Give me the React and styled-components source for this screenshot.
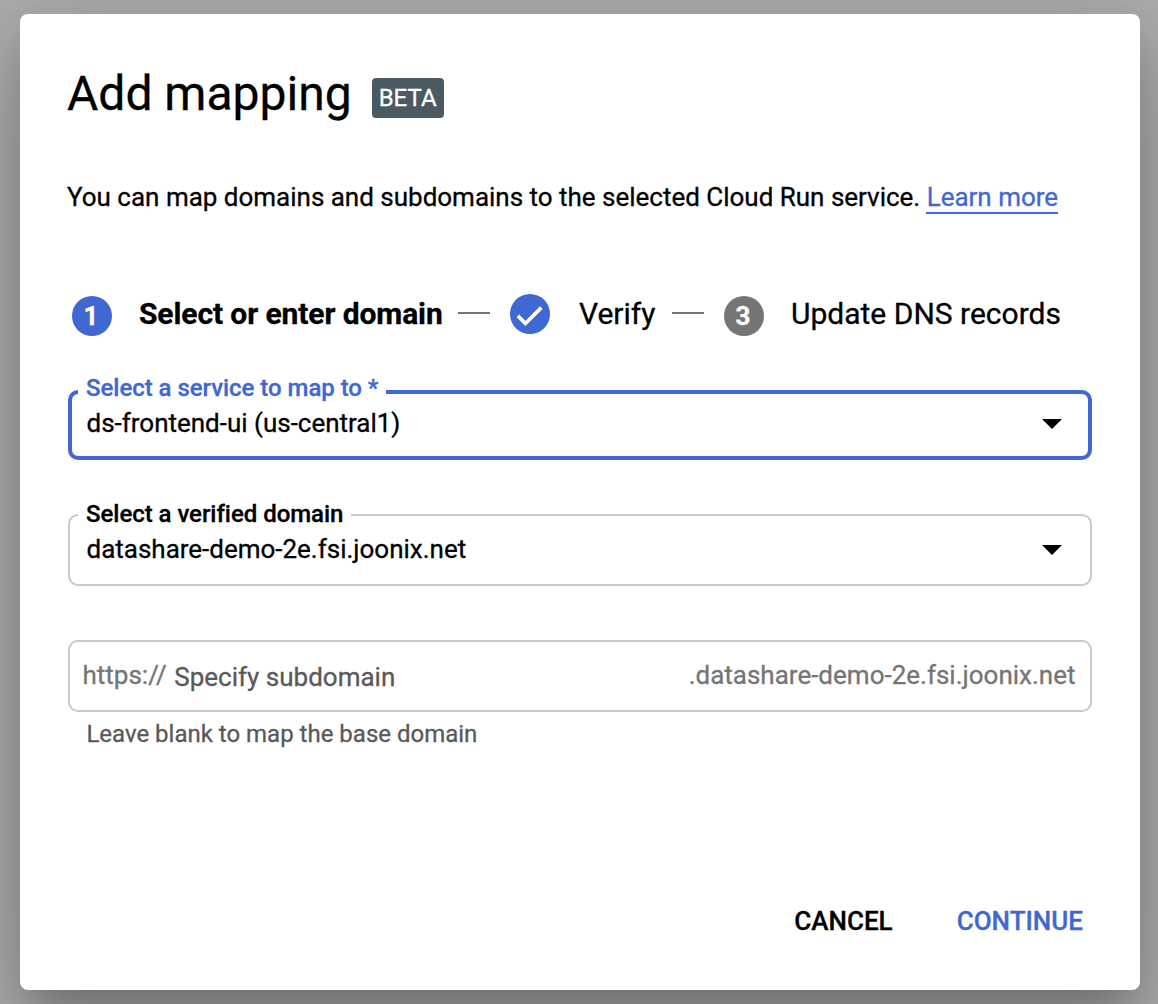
import React from "react";
import styled, { createGlobalStyle } from "styled-components";

const BLUE = "#3f68d2";

const GlobalStyle = createGlobalStyle`
  * { box-sizing: border-box; }
  body {
    margin: 0;
    background: #adadad;
    color: #000;
    font-family: Roboto, "Liberation Sans", sans-serif;
    -webkit-text-stroke: 0.3px;
    overflow: hidden;
  }
`;

const Backdrop = styled.div`
  height: 1004px;
  padding: 14px 18px 14px 20px;
`;

const Dialog = styled.main`
  display: flex;
  flex-direction: column;
  height: 976px;
  padding: 48px 48px 43px;
  background: #fff;
  border-radius: 8px;
  box-shadow:
    0 22px 30px -14px rgba(0, 0, 0, 0.2),
    0 48px 76px 6px rgba(0, 0, 0, 0.14),
    0 18px 92px 16px rgba(0, 0, 0, 0.12);
`;

const Header = styled.header`
  display: flex;
  align-items: center;
  gap: 20px;
  height: 64px;
  margin-left: -1px;
`;

const Title = styled.h1`
  margin: 0;
  font-size: 48px;
  font-weight: 400;
  line-height: 64px;
  white-space: nowrap;
`;

const Badge = styled.span`
  width: 72px;
  height: 40px;
  margin-top: 8px;
  border-radius: 4px;
  background: #4a5a62;
  color: #fff;
  font-size: 24px;
  line-height: 40px;
  text-align: center;
`;

const Intro = styled.p`
  margin: 51px 0 0 -1px;
  font-size: 26px;
  line-height: 40px;
  letter-spacing: -0.01px;
  white-space: nowrap;
`;

const Link = styled.a`
  margin-left: -1px;
  padding-left: 1px;
  border-bottom: 2px solid ${BLUE};
  color: ${BLUE};
`;

const Stepper = styled.ol`
  display: flex;
  align-items: center;
  height: 44px;
  margin: 75px 0 0;
  padding: 0 0 0 4px;
  list-style: none;
`;

const Step = styled.li`
  display: flex;
  align-items: center;
  width: ${(p) => p.$width}px;
`;

const StepDot = styled.span`
  display: grid;
  place-items: center;
  flex: none;
  width: 40px;
  height: 40px;
  margin-top: ${(p) => (p.$done ? 0 : 4)}px;
  padding-right: ${(p) => (p.$done ? 0 : 2)}px;
  border-radius: 50%;
  background: ${(p) => (p.$muted ? "#757575" : BLUE)};
  color: #fff;
  font-size: 26px;
  font-weight: 700;
  line-height: 40px;
`;

const StepLabel = styled.span`
  margin-left: ${(p) => p.$indent || 27}px;
  font-size: 30px;
  font-weight: ${(p) => (p.$active ? 700 : 400)};
  letter-spacing: ${(p) => (p.$active ? "-0.1px" : "0")};
  line-height: 44px;
  white-space: nowrap;
`;

const Connector = styled.li`
  width: 32px;
  height: 2px;
  margin: 0 20px 2px 0;
  background: #757575;
`;

const Field = styled.div`
  position: relative;
  display: flex;
  align-items: center;
  justify-content: space-between;
  height: ${(p) => (p.$focused ? 70 : 72)}px;
  margin-top: ${(p) => p.$gap}px;
  padding: 0 ${(p) => (p.$focused ? 26 : 28)}px 0 ${(p) => (p.$focused ? 14.5 : 16.5)}px;
  border: ${(p) => (p.$focused ? `4px solid ${BLUE}` : "2px solid #c9c9c9")};
  border-radius: 10px;
  font-size: 26px;
  line-height: 32px;
`;

const FieldLabel = styled.label`
  position: absolute;
  left: ${(p) => (p.$focused ? 6 : 8)}px;
  top: ${(p) => (p.$focused ? -22 : -18)}px;
  width: ${(p) => p.$width}px;
  padding-left: 8px;
  background: #fff;
  color: ${(p) => (p.$focused ? BLUE : "#000")};
  font-size: 24px;
  font-weight: 500;
  letter-spacing: -0.04px;
  line-height: 32px;
  white-space: nowrap;
`;

const Value = styled.span`
  margin-bottom: ${(p) => p.$lift}px;
  letter-spacing: -0.01px;
  white-space: nowrap;
`;

const Caret = styled.svg`
  width: 20px;
  height: 10px;
  margin-bottom: ${(p) => p.$lift}px;
`;

const InputField = styled(Field)`
  justify-content: flex-start;
  padding: 0 14.5px 0 12.5px;
  color: #757575;
`;

const Affix = styled.span`
  margin: ${(p) => (p.$end ? "0 0 2px auto" : "0 7.5px 2px 0")};
  white-space: nowrap;
`;

const Placeholder = styled.span`
  margin-top: 2px;
  color: #595959;
  white-space: nowrap;
`;

const Hint = styled.p`
  margin: 6px 0 0 18.4px;
  color: #595959;
  font-size: 24px;
  line-height: 32px;
`;

const Actions = styled.footer`
  display: flex;
  justify-content: flex-end;
  gap: 64px;
  margin-top: auto;
  padding-right: 9px;
`;

const Action = styled.button`
  padding: 0;
  border: 0;
  background: none;
  color: ${(p) => (p.$primary ? BLUE : "#000")};
  font: 500 26px/52px Roboto, sans-serif;
`;

const DropIcon = ({ lift }) => (
  <Caret $lift={lift} viewBox="0 0 20 10">
    <path d="M0 0H20L10 10Z" fill="#000" />
  </Caret>
);

export default function App() {
  return (
    <Backdrop>
      <GlobalStyle />
      <Dialog>
        <Header>
          <Title>Add mapping</Title>
          <Badge>BETA</Badge>
        </Header>
        <Intro>
          You can map domains and subdomains to the selected Cloud Run service. <Link>Learn more</Link>
        </Intro>
        <Stepper>
          <Step $width={386}>
            <StepDot>1</StepDot>
            <StepLabel $active>Select or enter domain</StepLabel>
          </Step>
          <Connector />
          <Step $width={162}>
            <StepDot $done>
              <svg width="40" height="40" viewBox="0 0 40 40">
                <path d="M7.9 21.9L15.4 29.5L31.3 13.6" fill="none" stroke="#fff" strokeWidth="3.7" />
              </svg>
            </StepDot>
            <StepLabel $indent={29}>Verify</StepLabel>
          </Step>
          <Connector />
          <Step>
            <StepDot $muted>3</StepDot>
            <StepLabel>Update DNS records</StepLabel>
          </Step>
        </Stepper>

        <Field $focused $gap={54}>
          <FieldLabel $focused $width={308}>Select a service to map to *</FieldLabel>
          <Value $lift={4}>ds-frontend-ui (us-central1)</Value>
          <DropIcon lift={2} />
        </Field>
        <Field $gap={54}>
          <FieldLabel $width={273}>Select a verified domain</FieldLabel>
          <Value $lift={2}>datashare-demo-2e.fsi.joonix.net</Value>
          <DropIcon lift={0} />
        </Field>
        <InputField $gap={54}>
          <Affix>https://</Affix>
          <Placeholder>Specify subdomain</Placeholder>
          <Affix $end>.datashare-demo-2e.fsi.joonix.net</Affix>
        </InputField>
        <Hint>Leave blank to map the base domain</Hint>

        <Actions>
          <Action>CANCEL</Action>
          <Action $primary>CONTINUE</Action>
        </Actions>
      </Dialog>
    </Backdrop>
  );
}
